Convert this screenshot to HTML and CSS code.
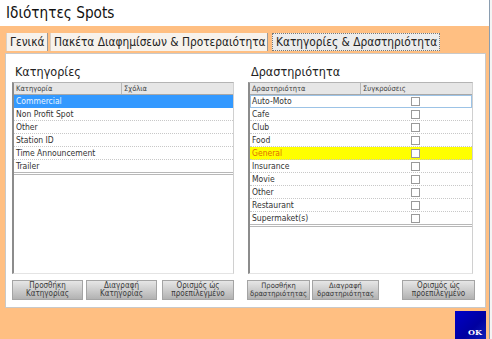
FILE: index.html
```html
<!DOCTYPE html>
<html>
<head>
<meta charset="utf-8">
<link rel="stylesheet" href="styles.css">
</head>
<body>
<div class="app">
  <div class="main">
    <div class="titlebar">Ιδιότητες Spots</div>
    <div class="content">
      <div class="tabs">
        <div class="tab t1">Γενικά</div>
        <div class="tab t2">Πακέτα Διαφημίσεων &amp; Προτεραιότητα</div>
        <div class="tab active">Κατηγορίες &amp; Δραστηριότητα</div>
      </div>
      <div class="panel">
        <div class="col col-left">
          <div class="heading">Κατηγορίες</div>
          <div class="list">
            <div class="row head"><span class="c1 l">Κατηγορία</span><span class="c2 l">Σχόλια</span></div>
            <div class="row sel"><span class="c1 l">Commercial</span><span class="c2 l"></span></div>
            <div class="row"><span class="c1 l">Non Profit Spot</span><span class="c2 l"></span></div>
            <div class="row"><span class="c1 l">Other</span><span class="c2 l"></span></div>
            <div class="row"><span class="c1 l">Station ID</span><span class="c2 l"></span></div>
            <div class="row"><span class="c1 l">Time Announcement</span><span class="c2 l"></span></div>
            <div class="row last"><span class="c1 l">Trailer</span><span class="c2 l"></span></div>
          </div>
          <div class="buttons">
            <div class="btn w71">Προσθήκη<br>Κατηγορίας</div>
            <div class="btn w71 g3">Διαγραφή<br>Κατηγορίας</div>
            <div class="btn w72 g5">Ορισμός ώς<br>προεπιλεγμένο</div>
          </div>
        </div>
        <div class="col col-right">
          <div class="heading">Δραστηριότητα</div>
          <div class="list rlist">
            <div class="row head"><span class="c1 r">Δραστηριότητα</span><span class="c2 r">Συγκρούσεις</span></div>
            <div class="row focus"><span class="c1 r">Auto-Moto</span><span class="c2 r"><i class="cb"></i></span></div>
            <div class="row"><span class="c1 r">Cafe</span><span class="c2 r"><i class="cb"></i></span></div>
            <div class="row"><span class="c1 r">Club</span><span class="c2 r"><i class="cb"></i></span></div>
            <div class="row"><span class="c1 r">Food</span><span class="c2 r"><i class="cb"></i></span></div>
            <div class="row yellow"><span class="c1 r">General</span><span class="c2 r"><i class="cb"></i></span></div>
            <div class="row"><span class="c1 r">Insurance</span><span class="c2 r"><i class="cb"></i></span></div>
            <div class="row"><span class="c1 r">Movie</span><span class="c2 r"><i class="cb"></i></span></div>
            <div class="row"><span class="c1 r">Other</span><span class="c2 r"><i class="cb"></i></span></div>
            <div class="row"><span class="c1 r">Restaurant</span><span class="c2 r"><i class="cb"></i></span></div>
            <div class="row last"><span class="c1 r">Supermaket(s)</span><span class="c2 r"><i class="cb"></i></span></div>
          </div>
          <div class="buttons">
            <div class="btn w63">Προσθήκη<br>δραστηριότητας</div>
            <div class="btn w67 g2">Διαγραφή<br>δραστηριότητας</div>
            <div class="btn w73 g23">Ορισμός ώς<br>προεπιλεγμένο</div>
          </div>
        </div>
      </div>
      <div class="footer">
        <div class="ok">OK</div>
      </div>
    </div>
  </div>
  <div class="frame"></div>
</div>
</body>
</html>
```

FILE: styles.css
```css
html, body {
  margin: 0;
  padding: 0;
}
body {
  width: 492px;
  height: 339px;
  overflow: hidden;
  font-family: "DejaVu Sans Condensed", "DejaVu Sans", sans-serif;
  color: #333;
  background: #fff;
}
.app {
  display: flex;
  height: 339px;
}
.main {
  width: 489px;
  display: flex;
  flex-direction: column;
}
.frame {
  width: 3px;
  border-left: 1px solid #8a9db0;
  box-sizing: border-box;
  background: #f4f4f4;
}
.titlebar {
  height: 26px;
  background: #fff;
  font-size: 15.2px;
  line-height: 27px;
  padding-left: 6px;
  color: #111;
  box-sizing: border-box;
}
.content {
  flex: 1;
  background: #ffbf82;
  display: flex;
  flex-direction: column;
}
.tabs {
  display: flex;
  margin-top: 7px;
  margin-left: 6px;
  height: 18px;
}
.tab {
  font-size: 11.8px;
  line-height: 18px;
  padding: 0 2px 0 3px;
  background: #f7f2ec;
  border-right: 1px solid #9a9a9a;
  border-left: 1px solid #d8d0c8;
  color: #222;
  white-space: nowrap;
}
.t1 { width: 42px; box-sizing: border-box; }
.t2 { width: 218px; box-sizing: border-box; margin-left: 2px; }
.tab.active {
  background: #ececec;
  border: 1px dotted #777;
  line-height: 16px;
  margin-left: 4px;
  padding: 0 3px;
  width: 168px;
  box-sizing: border-box;
}
.panel {
  margin: 2px 0 0 5px;
  width: 481px;
  height: 255px;
  box-sizing: border-box;
  background: #fff;
  border: 1px solid #c9c9c9;
  display: flex;
  padding: 0 10px 0 6px;
  gap: 13px;
}
.col {
  display: flex;
  flex-direction: column;
}
.col-left { width: 222px; }
.col-right { width: 228px; }
.heading {
  height: 28px;
  box-sizing: border-box;
  padding: 10px 0 0 3px;
  font-size: 12.5px;
  color: #222;
}
.col-right .heading { padding-left: 4px; }
.list {
  height: 192px;
  box-sizing: border-box;
  border-left: 2px solid #8c8c8c;
  border-top: 1px solid #b4b4b4;
  border-right: 1px solid #d0d0d0;
  border-bottom: 1px solid #e4e4e4;
}
.rlist {
  margin: 0 2px 0 1px;
}
.row {
  display: flex;
  height: 13px;
  box-sizing: border-box;
  border-bottom: 1px dotted #c8c8c8;
  font-size: 8.5px;
  line-height: 12px;
  color: #333;
}
.row.head {
  height: 12px;
  background: #e6e6e6;
  border-bottom: 1px solid #a8a8a8;
  font-size: 7.5px;
  line-height: 11px;
  color: #444;
}
.row.last {
  border-bottom: 3px double #b8b8b8;
  height: 15px;
}
.c1, .c2 { padding-left: 2px; box-sizing: border-box; }
.c1.l { width: 108px; }
.head .c1 { border-right: 1px solid #b8b8b8; }
.c2.l { flex: 1; }
.c1.r { width: 111px; }
.c2.r { flex: 1; position: relative; }
.row.sel {
  background: #3399ff;
  color: #e8f4ff;
  border-bottom: 1px solid #3399ff;
}
.row.focus {
  outline: 1px solid #9cc3e6;
  outline-offset: -1px;
}
.row.yellow {
  background: #ffff00;
  color: #e07000;
}
.cb {
  display: block;
  position: absolute;
  left: 50px;
  top: 2px;
  width: 7px;
  height: 7px;
  border: 1px solid #9a9a9a;
  background: #fff;
}
.buttons {
  display: flex;
  margin-top: 6px;
  height: 20px;
}
.btn {
  height: 20px;
  box-sizing: border-box;
  background: linear-gradient(to bottom, #e6e6e6 0%, #cacaca 55%, #b2b2b2 100%);
  border: 1px solid #a4a4a4;
  font-size: 8px;
  line-height: 8.8px;
  padding-top: 0.5px;
  text-align: center;
  color: #3a3a3a;
  overflow: hidden;
  white-space: nowrap;
}
.w71 { width: 71px; }
.w72 { width: 72px; }
.w63 { width: 63px; }
.w67 { width: 67px; }
.w73 { width: 73px; }
.g3 { margin-left: 3px; }
.g5 { margin-left: 5px; }
.g2 { margin-left: 2px; }
.g23 { margin-left: 23px; }
.w63, .w67 { font-size: 7.5px; }
.footer {
  display: flex;
  justify-content: flex-end;
  margin-top: 3px;
  flex: 1;
  padding-right: 3px;
}
.ok {
  width: 31px;
  height: 28px;
  box-sizing: border-box;
  background: linear-gradient(135deg, #0000c8 0%, #0000a0 60%, #1020b8 100%);
  color: #fff;
  font-size: 8px;
  font-weight: bold;
  text-align: right;
  padding: 16px 4px 0 0;
  font-family: "DejaVu Serif", serif;
}
```
